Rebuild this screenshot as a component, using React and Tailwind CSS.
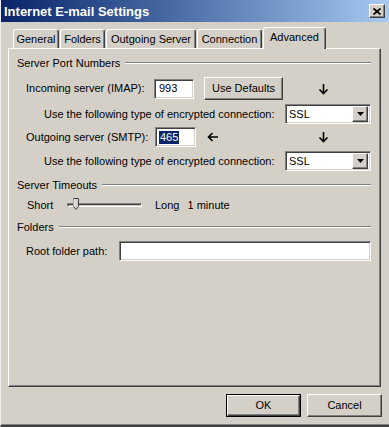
import React from 'react';

const raised = 'bg-[#d4d0c8] border border-t-white border-l-white border-r-[#404040] border-b-[#404040] shadow-[inset_-1px_-1px_0_#808080]';
const sunken = 'bg-white border border-t-[#808080] border-l-[#808080] border-r-white border-b-white shadow-[inset_1px_1px_0_#404040,inset_-1px_-1px_0_#d4d0c8]';

const GroupHeading = ({ label, className }) => (
    <div className={`flex items-center h-[14px] pl-[8px] pr-[9px] ${className}`}>
        <span className="whitespace-nowrap">{label}</span>
        <div className="flex-1 ml-[5px] h-[2px] border-t border-t-[#808080] border-b border-b-white" />
    </div>
);

const DownArrow = () => (
    <svg width="11" height="12" viewBox="0 0 11 12">
        <path d="M5.5 1 V10.5 M1.5 6.5 L5.5 10.5 L9.5 6.5" stroke="#000" strokeWidth="1.6" fill="none" />
    </svg>
);

const LeftArrow = () => (
    <svg width="12" height="10" viewBox="0 0 12 10">
        <path d="M1.5 5 H11 M5.5 1 L1.5 5 L5.5 9" stroke="#000" strokeWidth="1.6" fill="none" />
    </svg>
);

const Select = ({ value }) => (
    <div className={`w-[86px] h-[20px] ${sunken} flex items-center pl-[3px] pr-[2px]`}>
        <span className="flex-1">{value}</span>
        <div className={`w-[16px] h-[16px] ${raised} flex items-center justify-center`}>
            <svg width="7" height="4" viewBox="0 0 7 4"><path d="M0 0 H7 L3.5 4 Z" fill="#000" /></svg>
        </div>
    </div>
);

const Tab = ({ label, width, active }) => (
    <div
        className={`${width} flex justify-center rounded-t-[3px] border-t border-l border-t-white border-l-white border-r border-r-[#404040] shadow-[inset_-1px_0_0_#808080] bg-[#d4d0c8] ${
            active ? 'h-[22px] -mb-[1px] relative z-10 pt-[3px]' : 'h-[19px] pt-[3px]'
        }`}
    >
        {label}
    </div>
);

const App = () => {
    return (
        <div className="w-[389px] h-[427px] bg-[#d4d0c8] overflow-hidden flex flex-col text-[11px] leading-[13px] text-black font-['Liberation_Sans',Arial,sans-serif] border-l border-l-[#eeeeee] border-b-2 border-b-[#404040] shadow-[inset_0_-1px_0_#808080]">
            {/* Title bar */}
            <div className="h-[22px] shrink-0 flex items-center justify-between pl-[3px] pr-[4px] bg-gradient-to-r from-[#0a246a] to-[#a6caf0]">
                <span className="text-white font-bold text-[13px]">Internet E-mail Settings</span>
                <div className={`w-[16px] h-[14px] ${raised} flex items-center justify-center`}>
                    <svg width="8" height="7" viewBox="0 0 8 7">
                        <path d="M0.5 0.5 L7.5 6.5 M7.5 0.5 L0.5 6.5" stroke="#000" strokeWidth="1.8" />
                    </svg>
                </div>
            </div>

            {/* Tabs */}
            <div className="h-[21px] mt-[5px] shrink-0 flex items-end gap-[1px] pl-[12px]">
                <Tab label="General" width="w-[46px]" />
                <Tab label="Folders" width="w-[45px]" />
                <Tab label="Outgoing Server" width="w-[90px]" />
                <Tab label="Connection" width="w-[65px]" />
                <Tab label="Advanced" width="w-[63px]" active />
            </div>

            {/* Tab panel */}
            <div className="ml-[7px] w-[373px] h-[339px] shrink-0 flex flex-col border border-t-white border-l-white border-r-[#404040] border-b-[#404040] shadow-[inset_-1px_-1px_0_#808080]">
                <GroupHeading label="Server Port Numbers" className="mt-[7px]" />

                <div className="flex items-center h-[23px] mt-[7px] pl-[17px]">
                    <span className="w-[128px]">Incoming server (IMAP):</span>
                    <div className={`w-[40px] h-[20px] ${sunken} flex items-center pl-[4px]`}>993</div>
                    <div className={`ml-[10px] w-[79px] h-[23px] ${raised} flex items-center justify-center`}>Use Defaults</div>
                    <div className="ml-[35px] flex"><DownArrow /></div>
                </div>

                <div className="flex items-center h-[20px] mt-[4px] pl-[35px]">
                    <span className="w-[241px]">Use the following type of encrypted connection:</span>
                    <Select value="SSL" />
                </div>

                <div className="flex items-center h-[20px] mt-[3px] pl-[17px]">
                    <span className="w-[129px]">Outgoing server (SMTP):</span>
                    <div className={`w-[41px] h-[20px] ${sunken} flex items-center pl-[3px]`}>
                        <span className="bg-[#0a246a] text-white px-[1px]">465</span>
                    </div>
                    <div className="ml-[11px] flex"><LeftArrow /></div>
                    <div className="ml-[99px] flex"><DownArrow /></div>
                </div>

                <div className="flex items-center h-[20px] mt-[4px] pl-[35px]">
                    <span className="w-[241px]">Use the following type of encrypted connection:</span>
                    <Select value="SSL" />
                </div>

                <GroupHeading label="Server Timeouts" className="mt-[7px]" />

                <div className="flex items-center h-[20px] mt-[3px] pl-[18px]">
                    <span className="w-[40px]">Short</span>
                    <div className="relative w-[75px] h-[14px] flex items-center">
                        <div className="w-full h-[4px] border border-t-[#808080] border-l-[#808080] border-r-white border-b-white shadow-[inset_1px_1px_0_#404040]" />
                        <svg className="absolute left-[6px] top-0" width="6" height="12" viewBox="0 0 6 12">
                            <path d="M0.5 0.5 H5.5 V8.5 L3 11.5 L0.5 8.5 Z" fill="#d4d0c8" stroke="#404040" strokeWidth="1" />
                            <path d="M1 1 V8.5" stroke="#fff" strokeWidth="1" />
                        </svg>
                    </div>
                    <span className="ml-[13px]">Long</span>
                    <span className="ml-[8px]">1 minute</span>
                </div>

                <GroupHeading label="Folders" className="mt-[5px]" />

                <div className="flex items-center h-[20px] mt-[7px] pl-[17px]">
                    <span className="w-[93px]">Root folder path:</span>
                    <div className={`w-[252px] h-[20px] ${sunken}`} />
                </div>
            </div>

            {/* Buttons */}
            <div className="flex mt-[7px] pl-[225px] gap-[6px]">
                <div className="w-[75px] h-[23px] border border-black flex">
                    <div className={`flex-1 ${raised} flex items-center justify-center`}>OK</div>
                </div>
                <div className={`w-[75px] h-[23px] ${raised} flex items-center justify-center`}>Cancel</div>
            </div>
        </div>
    );
};

export default App;
